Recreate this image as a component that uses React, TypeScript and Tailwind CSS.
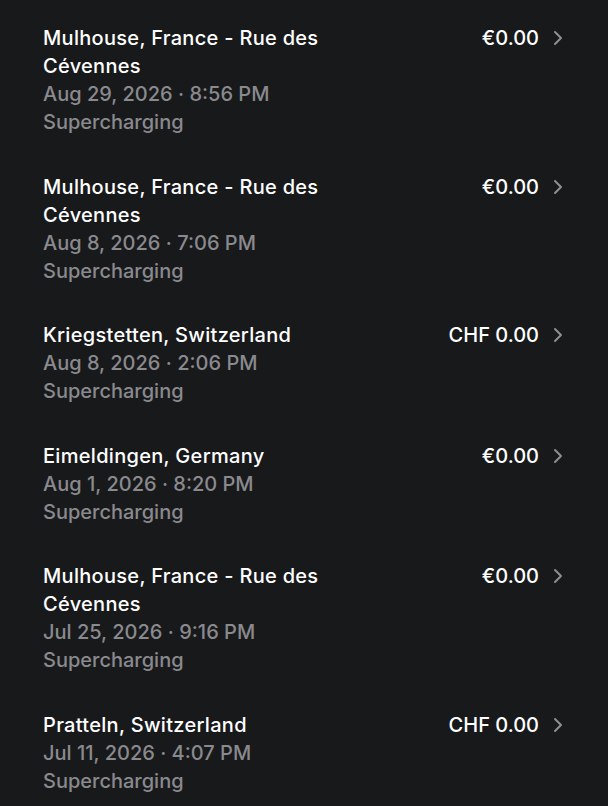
import type { ReactNode } from "react";

const SESSIONS = [
  { place: "Mulhouse, France - Rue des Cévennes", date: "Aug 29, 2026 · 8:56 PM", amount: "€0.00" },
  { place: "Mulhouse, France - Rue des Cévennes", date: "Aug 8, 2026 · 7:06 PM", amount: "€0.00" },
  { place: "Kriegstetten, Switzerland", date: "Aug 8, 2026 · 2:06 PM", amount: "CHF 0.00" },
  { place: "Eimeldingen, Germany", date: "Aug 1, 2026 · 8:20 PM", amount: "€0.00" },
  { place: "Mulhouse, France - Rue des Cévennes", date: "Jul 25, 2026 · 9:16 PM", amount: "€0.00" },
  { place: "Pratteln, Switzerland", date: "Jul 11, 2026 · 4:07 PM", amount: "CHF 0.00" },
];

function Chevron() {
  return (
    <svg width="10" height="16" viewBox="0 0 10 16" fill="none" stroke="#8e8e93" strokeWidth={2} strokeLinecap="round" strokeLinejoin="round">
      <polyline points="2 2 8 8 2 14" />
    </svg>
  );
}

function Line({ children, muted = false }: { children: ReactNode; muted?: boolean }) {
  return (
    <div
      className={`text-[20px] leading-[28px] font-medium ${
        muted ? "text-[#8a8a8e]" : "text-white tracking-[0.3px]"
      }`}
    >
      {children}
    </div>
  );
}

export default function App() {
  return (
    <div className="min-h-[806px] w-[608px] bg-[#18191b] font-['Inter',sans-serif] antialiased">
      <div className="flex flex-col gap-[36.5px] pt-6 pl-[43px] pr-[45px]">
        {SESSIONS.map((s, i) => (
          <div key={i} className="flex items-start">
            <div className="w-[330px]">
              <Line>{s.place}</Line>
              <Line muted>{s.date}</Line>
              <Line muted>Supercharging</Line>
            </div>
            <div className="ml-auto flex items-center gap-[14px] h-[28px]">
              <span className="text-[20px] font-medium text-white">{s.amount}</span>
              <Chevron />
            </div>
          </div>
        ))}
      </div>
    </div>
  );
}
